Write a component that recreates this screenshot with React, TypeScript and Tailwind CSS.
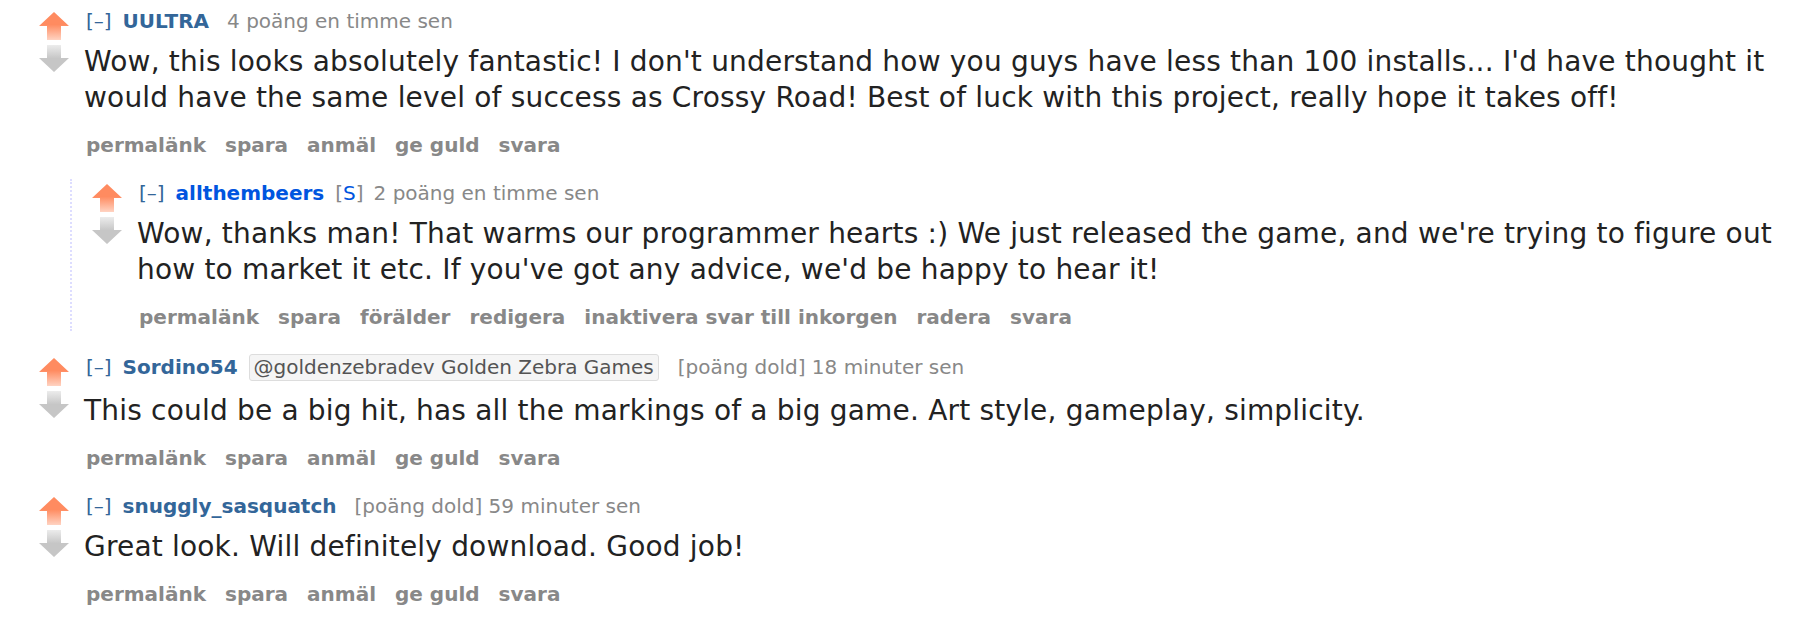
import React from "react";

const Up = () => (
  <svg width="30" height="28" viewBox="0 0 30 28" className="block">
    <defs>
      <linearGradient id="ug" x1="0" y1="0" x2="0" y2="1">
        <stop offset="0.45" stopColor="#ff8b60" />
        <stop offset="1" stopColor="#ffd3c2" />
      </linearGradient>
    </defs>
    <path d="M15 0 L30 14 L22 14 L22 28 L8 28 L8 14 L0 14 Z" fill="url(#ug)" />
  </svg>
);

const Down = () => (
  <svg width="30" height="27" viewBox="0 0 30 27" className="block">
    <defs>
      <linearGradient id="dg" x1="0" y1="0" x2="0" y2="1">
        <stop offset="0" stopColor="#ececec" />
        <stop offset="0.5" stopColor="#c6c6c6" />
      </linearGradient>
    </defs>
    <path d="M8 0 L22 0 L22 13 L30 13 L15 27 L0 13 L8 13 Z" fill="url(#dg)" />
  </svg>
);

type CommentProps = {
  author: string;
  submitter?: boolean;
  flair?: string;
  score: string;
  time: string;
  lines: string[];
  buttons: string[];
  children?: React.ReactNode;
};

function Comment({ author, submitter, flair, score, time, lines, buttons, children }: CommentProps) {
  return (
    <div className="flex flex-col">
      <div className="flex">
        <div className="flex flex-col w-[30px] mt-[5px] gap-[5px] shrink-0">
          <Up />
          <Down />
        </div>
        <div className="ml-[17px] flex-1">
          <div className={`flex items-baseline text-[20px] leading-[28px] text-[#888] ${flair ? "pb-[3px]" : ""}`}>
            <span className="text-[#369] mr-[11px]">[–]</span>
            <span className={`font-bold ${submitter ? "text-[#0055df]" : "text-[#369]"} ${submitter || flair ? "mr-[11px]" : "mr-[18px]"}`}>
              {author}
            </span>
            {submitter && (
              <span className="mr-[10px]">
                [<span className="text-[#0055df]">S</span>]
              </span>
            )}
            {flair && (
              <span className="mr-[19px] px-[4px] bg-[#f5f5f5] border border-[#dddddd] rounded-[3px] text-[#545454] leading-[25px]">
                {flair}
              </span>
            )}
            <span>
              {score} {time}
            </span>
          </div>
          <div className="mt-[9px] -ml-[2px] text-[28px] leading-[36px] tracking-[0.19px] text-[#222]">
            {lines.map((l, i) => (
              <div key={i}>{l}</div>
            ))}
          </div>
          <ul className="mt-[15px] flex gap-[19px] text-[20px] leading-[28px] font-bold text-[#888]">
            {buttons.map((b) => (
              <li key={b}>{b}</li>
            ))}
          </ul>
        </div>
      </div>
      {children}
    </div>
  );
}

const std = ["permalänk", "spara", "anmäl", "ge guld", "svara"];

export default function App() {
  return (
    <div
      className="w-[1818px] h-[642px] overflow-hidden bg-white pt-[7px] pl-[39px]"
      style={{ fontFamily: 'Verdana, "DejaVu Sans", sans-serif' }}
    >
      <div className="flex flex-col gap-[20px]">
        <Comment
          author="UULTRA"
          score="4 poäng"
          time="en timme sen"
          lines={[
            "Wow, this looks absolutely fantastic! I don't understand how you guys have less than 100 installs... I'd have thought it",
            "would have the same level of success as Crossy Road! Best of luck with this project, really hope it takes off!",
          ]}
          buttons={std}
        >
          <div className="ml-[31px] mt-[20px] mb-[2px] border-l-2 border-dotted border-[#ddddff] pl-[20px]">
            <Comment
              author="allthembeers"
              submitter
              score="2 poäng"
              time="en timme sen"
              lines={[
                "Wow, thanks man! That warms our programmer hearts :) We just released the game, and we're trying to figure out",
                "how to market it etc. If you've got any advice, we'd be happy to hear it!",
              ]}
              buttons={["permalänk", "spara", "förälder", "redigera", "inaktivera svar till inkorgen", "radera", "svara"]}
            />
          </div>
        </Comment>
        <Comment
          author="Sordino54"
          flair="@goldenzebradev Golden Zebra Games"
          score="[poäng dold]"
          time="18 minuter sen"
          lines={["This could be a big hit, has all the markings of a big game. Art style, gameplay, simplicity."]}
          buttons={std}
        />
        <Comment
          author="snuggly_sasquatch"
          score="[poäng dold]"
          time="59 minuter sen"
          lines={["Great look. Will definitely download. Good job!"]}
          buttons={std}
        />
      </div>
    </div>
  );
}
